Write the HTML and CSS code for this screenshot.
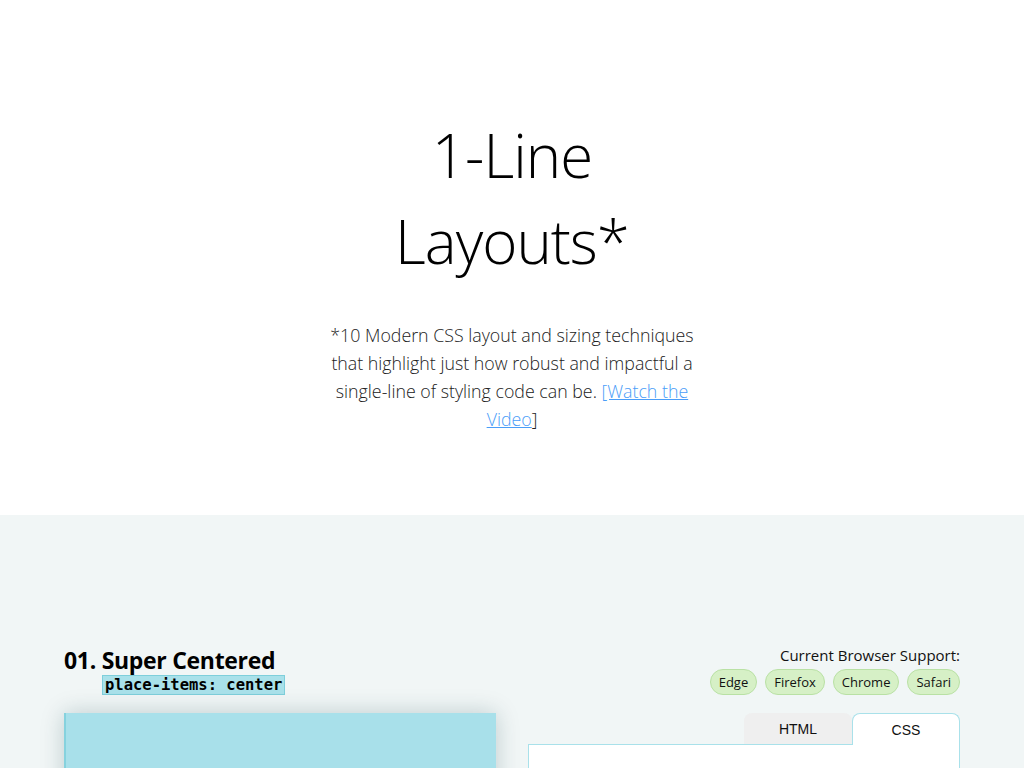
FILE: index.html
```html
<!DOCTYPE html>
<html lang="en">
<head>
<meta charset="utf-8">
<title>1-Line Layouts</title>
<link rel="stylesheet" href="styles.css">
</head>
<body>
<header class="hero">
  <h1 class="hero-title">1-Line<br>Layouts*</h1>
  <p class="hero-text">*10 Modern CSS layout and sizing techniques that highlight just how robust and impactful a single-line of styling code can be. <a href="#">[Watch the Video</a>]</p>
</header>
<main class="demos">
  <section class="demo">
    <div class="demo-head">
      <div class="demo-title">
        <h2>01. Super Centered</h2>
        <code class="demo-code">place-items: center</code>
      </div>
      <div class="support">
        <p class="support-label">Current Browser Support:</p>
        <ul class="pills">
          <li class="pill">Edge</li>
          <li class="pill">Firefox</li>
          <li class="pill">Chrome</li>
          <li class="pill">Safari</li>
        </ul>
      </div>
    </div>
    <div class="demo-body">
      <div class="preview"></div>
      <div class="editor">
        <div class="tabs">
          <button class="tab">HTML</button>
          <button class="tab tab-active">CSS</button>
        </div>
        <div class="panel"></div>
      </div>
    </div>
  </section>
</main>
</body>
</html>
```
FILE: styles.css
```css
* { box-sizing: border-box; }
html, body { margin: 0; padding: 0; }
body {
  font-family: "Open Sans", "Noto Sans", sans-serif;
  color: #111;
  background: #fff;
}
.hero {
  height: 515px;
  display: flex;
  flex-direction: column;
  align-items: center;
  padding-top: 112px;
}
.hero-title {
  margin: 0;
  font-weight: 300;
  font-size: 60px;
  line-height: 86px;
  text-align: center;
  color: #000;
  letter-spacing: -1px;
}
.hero-text {
  margin: 37px 0 0;
  width: 380px;
  text-align: center;
  font-weight: 300;
  font-size: 17.8px;
  line-height: 28px;
  color: #222;
}
.hero-text a { color: #4a9df8; text-decoration: underline; }
.demos {
  background: #f1f6f6;
  padding: 128px 64px 0;
  height: 253px;
  overflow: hidden;
}
.demo-head {
  display: flex;
  justify-content: space-between;
  align-items: flex-start;
}
.demo-title h2 {
  margin: 3px 0 0;
  font-family: "Open Sans", sans-serif;
  font-weight: 700;
  font-size: 23px;
  line-height: 28px;
  color: #000;
  letter-spacing: -0.3px;
}
.demo-code {
  display: block;
  width: fit-content;
  margin: 1px 0 0 38px;
  padding: 0 2px;
  font-family: "DejaVu Sans Mono", monospace;
  font-weight: 700;
  font-size: 15.5px;
  line-height: 18px;
  background: #a9e1ea;
  border: 1px solid #7ecfdb;
  color: #000;
}
.support { text-align: right; padding-top: 2px; }
.support-label {
  margin: 0;
  font-size: 15px;
  line-height: 20px;
  color: #111;
}
.pills {
  list-style: none;
  margin: 4px 0 0;
  padding: 0;
  display: flex;
  gap: 8px;
  justify-content: flex-end;
}
.pill {
  padding: 0 8px;
  height: 26px;
  line-height: 24px;
  font-size: 13px;
  background: #d6f0c6;
  border: 1px solid #b9e1a4;
  border-radius: 13px;
  color: #111;
}
.demo-body {
  margin-top: 18px;
  display: grid;
  grid-template-columns: 1fr 1fr;
  gap: 32px;
}
.preview {
  height: 200px;
  background: #a8e0ea;
  border-left: 2px solid #86d2de;
  box-shadow: 0 0 22px rgba(0, 60, 70, 0.22);
}
.editor { display: flex; flex-direction: column; }
.tabs {
  display: flex;
  justify-content: flex-end;
}
.tab {
  width: 108px;
  height: 31px;
  border: 1px solid transparent;
  border-bottom: none;
  border-radius: 8px 8px 0 0;
  background: #efefef;
  font-family: "Liberation Sans", Arial, sans-serif;
  font-size: 14px;
  color: #111;
  padding: 0;
}
.tab-active {
  background: #fff;
  border-color: #a9e1ea;
  height: 32px;
  margin-bottom: -1px;
  position: relative;
  z-index: 1;
}
.panel {
  height: 200px;
  background: #fff;
  border: 1px solid #a9e1ea;
}
```
